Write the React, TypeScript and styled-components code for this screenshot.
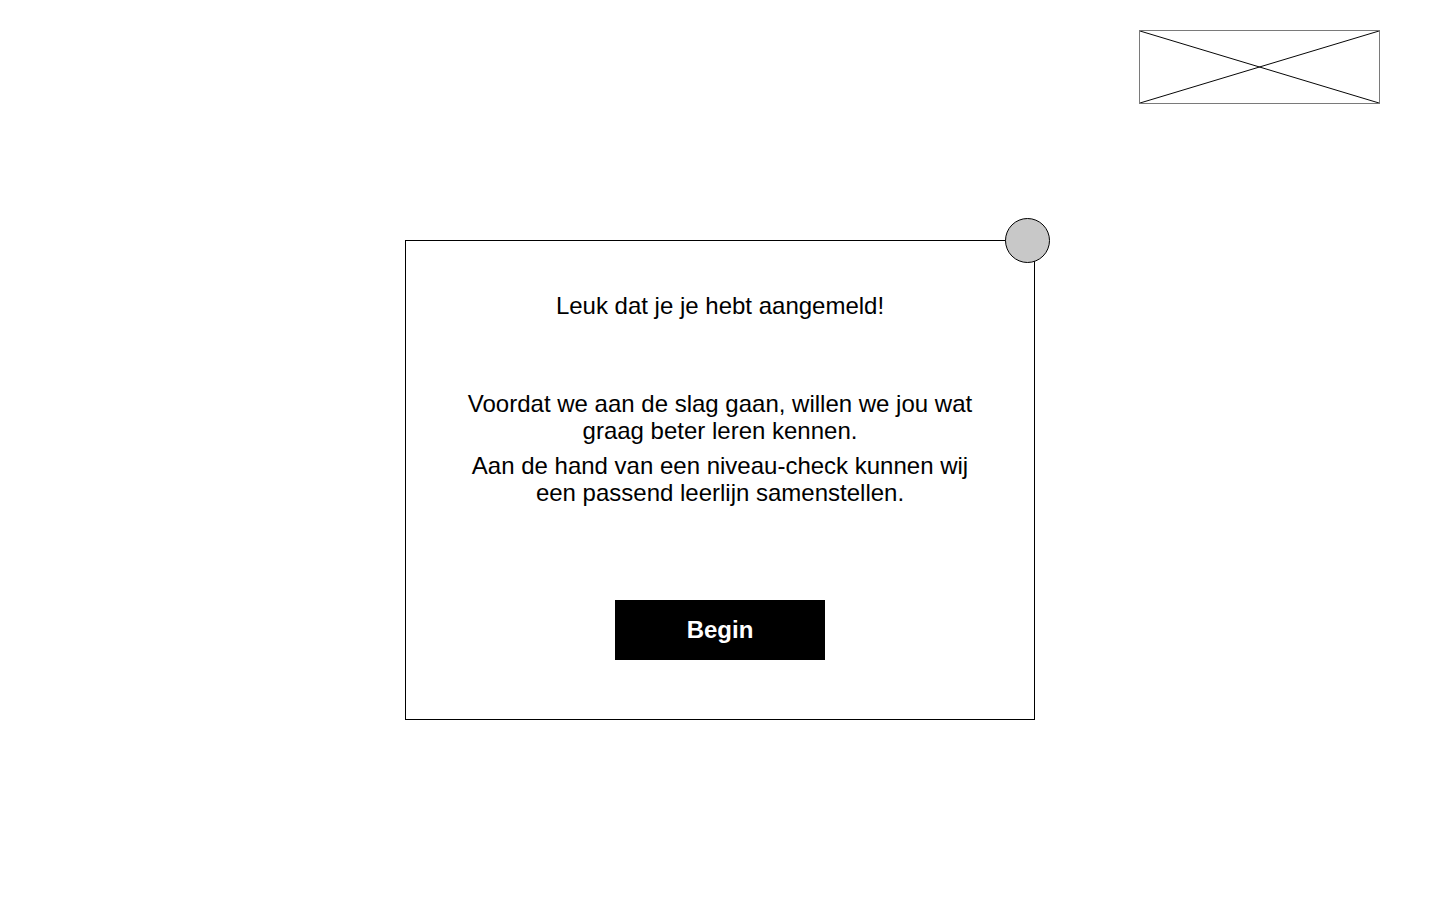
import React from "react";
import styled, { createGlobalStyle } from "styled-components";

const GlobalStyle = createGlobalStyle`
  html, body { margin: 0; padding: 0; background: #ffffff; }
  body { font-family: "Liberation Sans", Arial, sans-serif; color: #000; }
`;

const Page = styled.div`
  width: 1440px;
  height: 900px;
  display: flex;
  flex-direction: column;
  align-items: center;
  box-sizing: border-box;
`;

const Header = styled.header`
  align-self: stretch;
  display: flex;
  justify-content: flex-end;
  padding: 30px 60px 0 0;
`;

const LogoPlaceholder = styled.div`
  width: 241px;
  height: 74px;
  box-sizing: border-box;
  border: 1px solid #7a7a7a;
  svg { display: block; width: 100%; height: 100%; }
`;

const Dialog = styled.section`
  position: relative;
  margin-top: 136px;
  width: 630px;
  height: 480px;
  box-sizing: border-box;
  border: 1px solid #000;
  display: flex;
  flex-direction: column;
  align-items: center;
  padding-top: 51px;
`;

const CloseDot = styled.div`
  position: absolute;
  top: -23px;
  right: -16px;
  width: 45px;
  height: 45px;
  box-sizing: border-box;
  border-radius: 50%;
  background: #c8c8c8;
  border: 1px solid #000;
`;

const Title = styled.h1`
  margin: 0;
  font-size: 24px;
  font-weight: 400;
  line-height: 27px;
  text-align: center;
`;

const Body = styled.div`
  margin-top: 71px;
  width: 520px;
  display: flex;
  flex-direction: column;
  gap: 8px;
`;

const Paragraph = styled.p`
  margin: 0;
  font-size: 24px;
  line-height: 27px;
  text-align: center;
`;

const PrimaryButton = styled.button`
  margin-top: 94px;
  width: 210px;
  height: 60px;
  border: none;
  background: #000;
  color: #fff;
  font-family: "Liberation Sans", Arial, sans-serif;
  font-weight: 700;
  font-size: 24px;
  cursor: pointer;
`;

export default function App() {
  return (
    <>
      <GlobalStyle />
      <Page>
        <Header>
          <LogoPlaceholder>
            <svg viewBox="0 0 241 74" preserveAspectRatio="none">
              <line x1="0" y1="0" x2="241" y2="74" stroke="#000" strokeWidth="1" />
              <line x1="241" y1="0" x2="0" y2="74" stroke="#000" strokeWidth="1" />
            </svg>
          </LogoPlaceholder>
        </Header>
        <Dialog>
          <CloseDot />
          <Title>Leuk dat je je hebt aangemeld!</Title>
          <Body>
            <Paragraph>
              Voordat we aan de slag gaan, willen we jou wat graag beter leren kennen.
            </Paragraph>
            <Paragraph>
              Aan de hand van een niveau-check kunnen wij een passend leerlijn samenstellen.
            </Paragraph>
          </Body>
          <PrimaryButton>Begin</PrimaryButton>
        </Dialog>
      </Page>
    </>
  );
}
